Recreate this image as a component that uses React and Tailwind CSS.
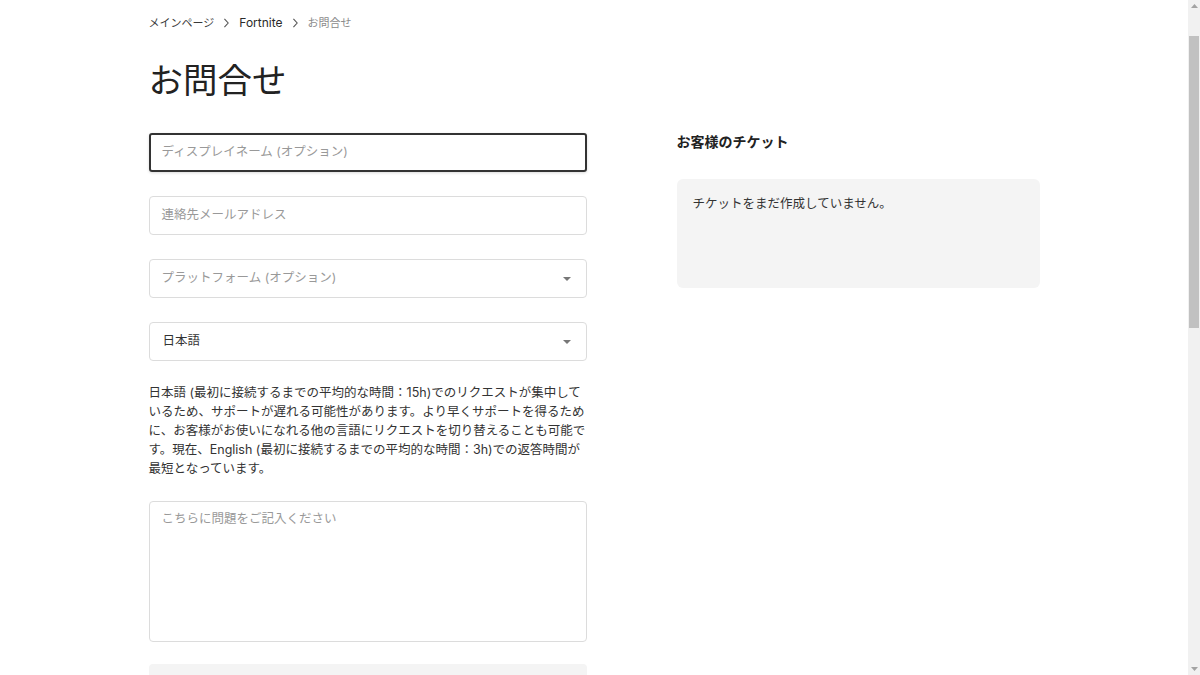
import React from 'react';

const font = { fontFamily: 'Inter, "Noto Sans CJK JP", sans-serif' };

const Caret = () => (
  <svg width="8" height="4" viewBox="0 0 8 4" className="text-[#777]">
    <path d="M0 0 L8 0 L4 4 Z" fill="currentColor" />
  </svg>
);

const Chevron = () => (
  <svg width="7" height="10" viewBox="0 0 8 12" className="mx-[9px]">
    <path d="M1.5 1 L6 6 L1.5 11" fill="none" stroke="#555" strokeWidth="1.3" />
  </svg>
);

export default function App() {
  return (
    <div className="relative h-[675px] w-[1200px] overflow-hidden bg-white text-[#333]" style={font}>
      <div className="mr-[12px] flex justify-center">
        <div className="w-[891px]">
          {/* breadcrumb */}
          <div className="flex h-[44px] items-center pt-[2px] text-[11px]">
            <span className="text-[#3a3a3a]">メインページ</span>
            <Chevron />
            <span className="text-[12px] text-[#2a2a2a]">Fortnite</span>
            <Chevron />
            <span className="text-[#8a8a8a]">お問合せ</span>
          </div>

          <h1 className="mt-[13px] text-[34.5px] font-normal leading-[48px] text-[#222]">お問合せ</h1>

          <div className="mt-[28px] flex gap-[90px]">
            {/* form */}
            <div className="flex w-[438px] flex-col">
              <div className="flex h-[39px] items-center rounded-[3px] border-2 border-[#333] px-[11px] text-[12.5px] text-[#999] shadow-[0_1px_3px_rgba(0,0,0,0.15)]">
                ディスプレイネーム (オプション)
              </div>
              <div className="mt-[24px] flex h-[39px] items-center rounded-[4px] border border-[#dcdcdc] px-[12px] text-[12.5px] text-[#999]">
                連絡先メールアドレス
              </div>
              <div className="mt-[24px] flex h-[39px] items-center justify-between rounded-[4px] border border-[#dcdcdc] pl-[12px] pr-[15px] text-[12.5px] text-[#999]">
                <span>プラットフォーム (オプション)</span>
                <Caret />
              </div>
              <div className="mt-[24px] flex h-[39px] items-center justify-between rounded-[4px] border border-[#dcdcdc] pl-[13px] pr-[15px] text-[12.5px] text-[#333]">
                <span>日本語</span>
                <Caret />
              </div>
              <p className="mt-[22px] text-[12.5px] leading-[19px] text-[#333]">
                日本語 (最初に接続するまでの平均的な時間：15h)でのリクエストが集中しているため、サポートが遅れる可能性があります。より早くサポートを得るために、お客様がお使いになれる他の言語にリクエストを切り替えることも可能です。現在、English (最初に接続するまでの平均的な時間：3h)での返答時間が最短となっています。
              </p>
              <div className="mt-[23px] h-[141px] rounded-[4px] border border-[#dcdcdc] px-[12px] pt-[8px] text-[12.5px] text-[#999]">
                こちらに問題をご記入ください
              </div>
              <div className="mt-[22px] h-[40px] rounded-[4px] bg-[#f4f4f4]" />
            </div>

            {/* tickets */}
            <div className="w-[363px]">
              <h2 className="text-[14px] font-bold leading-[18px] text-[#222]">お客様のチケット</h2>
              <div className="mt-[28px] h-[109px] rounded-[6px] bg-[#f4f4f4] px-[16px] pt-[16px] text-[12.5px] text-[#333]">
                チケットをまだ作成していません。
              </div>
            </div>
          </div>
        </div>
      </div>

      {/* scrollbar */}
      <div className="absolute right-0 top-0 flex h-full w-[12px] flex-col bg-[#f1f1f1]">
        <div className="flex h-[12px] items-center justify-center">
          <svg width="7" height="4" viewBox="0 0 7 4"><path d="M0 4 L3.5 0 L7 4 Z" fill="#a3a3a3" /></svg>
        </div>
        <div className="mx-[1px] mt-[24px] h-[292px] bg-[#c1c1c1]" />
        <div className="flex-1" />
        <div className="flex h-[12px] items-center justify-center">
          <svg width="7" height="4" viewBox="0 0 7 4"><path d="M0 0 L3.5 4 L7 0 Z" fill="#a3a3a3" /></svg>
        </div>
      </div>
    </div>
  );
}
